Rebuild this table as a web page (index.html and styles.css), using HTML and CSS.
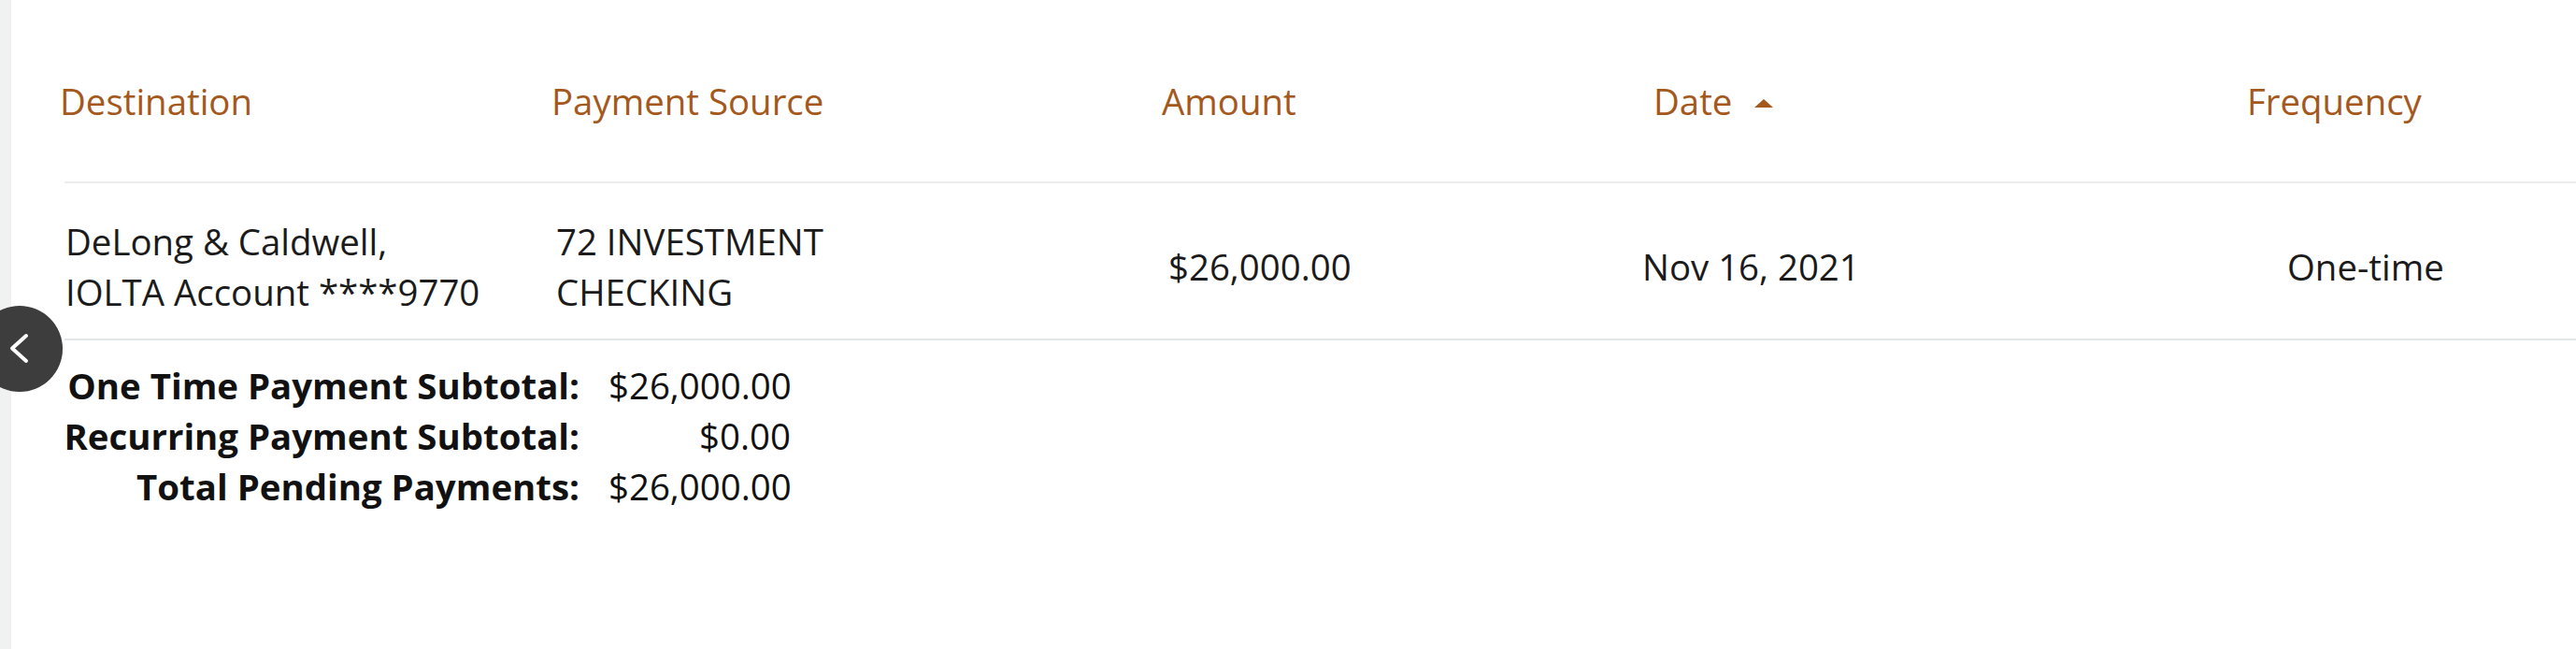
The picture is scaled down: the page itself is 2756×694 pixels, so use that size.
FILE: index.html
```html
<!DOCTYPE html>
<html lang="en">
<head>
<meta charset="utf-8">
<title>Pending Payments</title>
<link rel="stylesheet" href="styles.css">
</head>
<body>
<div class="page">
  <aside class="rail"></aside>
  <main class="content">
    <div class="table">
      <div class="row head">
        <div class="cell h1">Destination</div>
        <div class="cell h2">Payment Source</div>
        <div class="cell h3">Amount</div>
        <div class="cell h4">Date<span class="sort-up"></span></div>
        <div class="cell h5">Frequency</div>
      </div>
      <div class="row item">
        <div class="cell b1">DeLong &amp; Caldwell,<br>IOLTA Account ****9770</div>
        <div class="cell b2">72 INVESTMENT<br>CHECKING</div>
        <div class="cell b3">$26,000.00</div>
        <div class="cell b4">Nov 16, 2021</div>
        <div class="cell b5">One-time</div>
      </div>
    </div>
    <div class="summary">
      <div class="label">One Time Payment Subtotal:</div>
      <div class="value">$26,000.00</div>
      <div class="label">Recurring Payment Subtotal:</div>
      <div class="value">$0.00</div>
      <div class="label">Total Pending Payments:</div>
      <div class="value">$26,000.00</div>
    </div>
  </main>
  <button class="collapse" type="button" aria-label="Collapse">
    <svg width="92" height="92" viewBox="0 0 92 92" aria-hidden="true">
      <polyline points="53,32 38,45.5 53,59" fill="none" stroke="#ffffff" stroke-width="4" stroke-linecap="round" stroke-linejoin="round"/>
    </svg>
  </button>
</div>
</body>
</html>
```

FILE: styles.css
```css
html, body {
  margin: 0;
  padding: 0;
  background: #ffffff;
}

body {
  font-family: "Open Sans", "Noto Sans", sans-serif;
  color: #1b1b1b;
  width: 2756px;
  height: 694px;
  overflow: hidden;
}

.page {
  position: relative;
  display: flex;
  height: 694px;
}

.rail {
  width: 12px;
  flex: none;
  background: #f0f2f1;
}

.content {
  flex: 1;
  padding-left: 57px;
}

.row {
  display: grid;
  grid-template-columns: 518px 656px 511px 647px 1fr;
}

.head {
  padding: 78px 0 56px;
  border-bottom: 2px solid #ececec;
  font-size: 38.4px;
  line-height: 60px;
  color: #a5581c;
}

.h1 { margin-left: -5px; }
.h2 { padding-left: 3px; }
.h4 { padding-left: 15px; }
.h5 { padding-left: 3px; }

.sort-up {
  display: inline-block;
  width: 0;
  height: 0;
  margin-left: 24px;
  border-left: 10.5px solid transparent;
  border-right: 10.5px solid transparent;
  border-bottom: 9px solid #a5581c;
  vertical-align: 8px;
}

.item {
  padding: 35px 0 23px;
  border-bottom: 2px solid #e4e7ea;
  font-size: 38.4px;
  line-height: 54px;
  align-items: center;
}

.b1 { padding-left: 1px; }
.b2 { padding-left: 8px; }
.b3 { padding-left: 7px; }
.b4 { padding-left: 3px; }
.b5 { padding-left: 46px; }

.summary {
  display: grid;
  grid-template-columns: 581px 195px;
  column-gap: 31px;
  margin: 21px 0 0 -30px;
  font-size: 38.4px;
  line-height: 54px;
  color: #111111;
}

.summary .label {
  font-weight: 700;
  text-align: right;
  white-space: nowrap;
}

.summary .value {
  text-align: right;
  white-space: nowrap;
}

.collapse {
  position: absolute;
  left: -25px;
  top: 327px;
  width: 92px;
  height: 92px;
  padding: 0;
  border: 0;
  border-radius: 50%;
  background: #3d3d3d;
  display: flex;
  align-items: center;
  justify-content: center;
}

.collapse svg {
  display: block;
}
```
